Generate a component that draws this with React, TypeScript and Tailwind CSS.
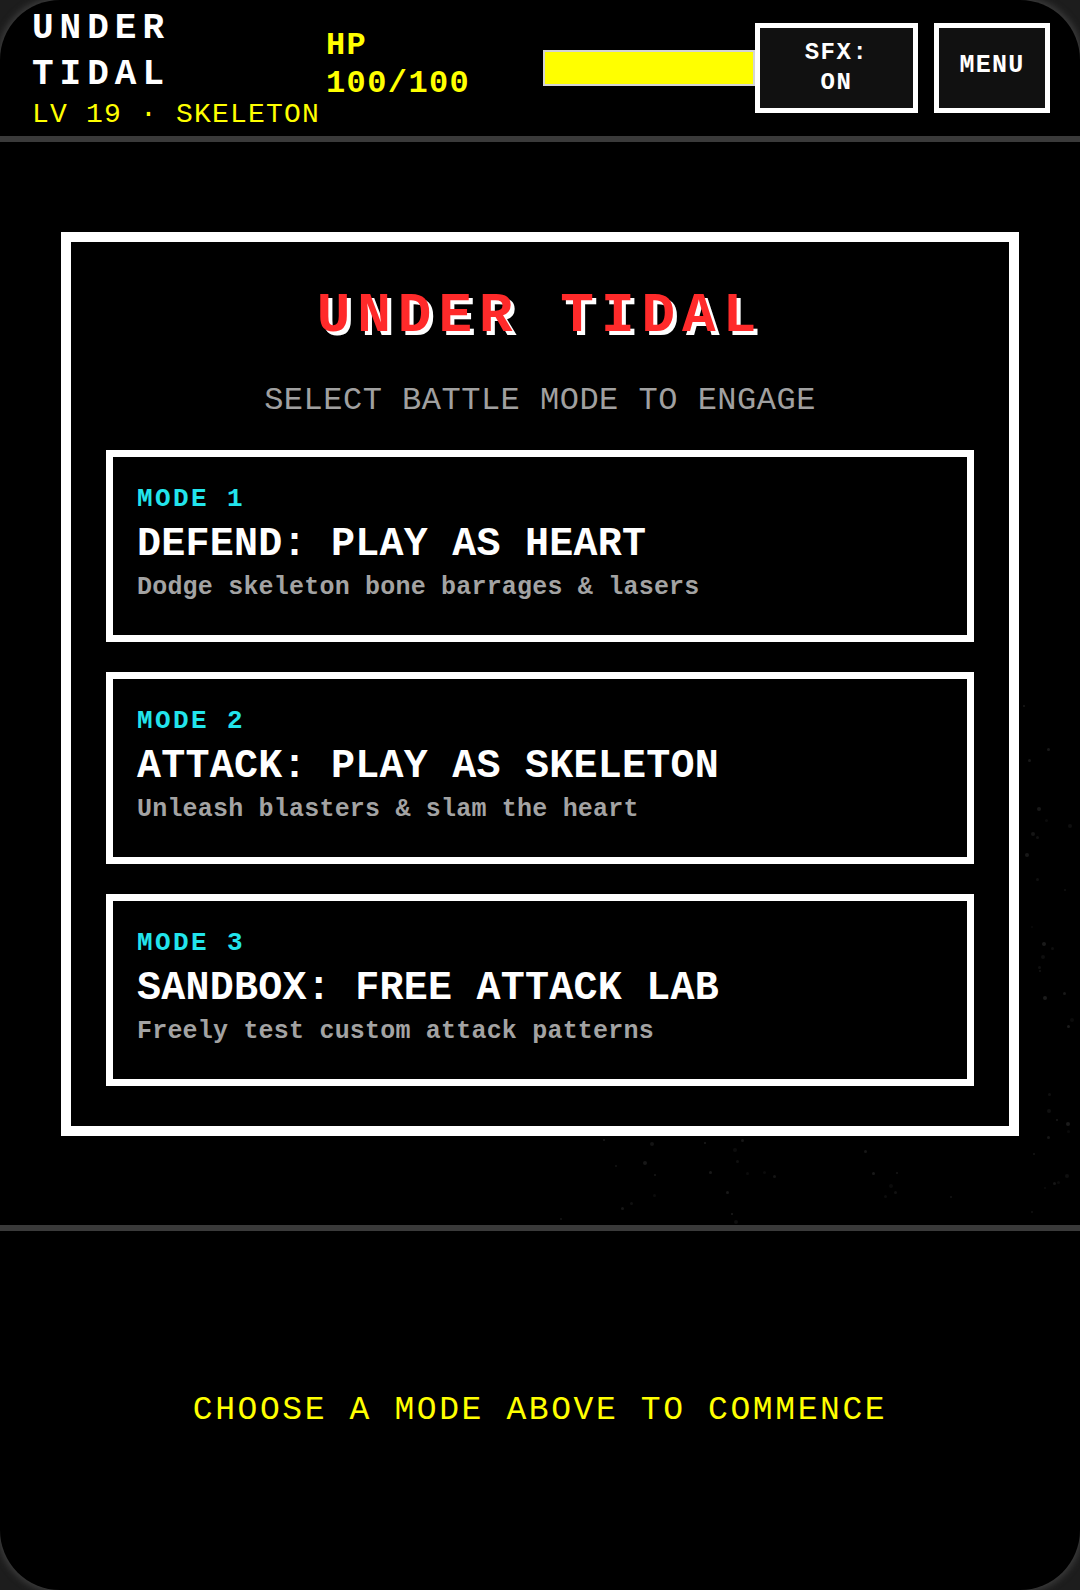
import React from "react";

type Mode = { tag: string; title: string; desc: string };

const MODES: Mode[] = [
  { tag: "MODE 1", title: "DEFEND: PLAY AS HEART", desc: "Dodge skeleton bone barrages & lasers" },
  { tag: "MODE 2", title: "ATTACK: PLAY AS SKELETON", desc: "Unleash blasters & slam the heart" },
  { tag: "MODE 3", title: "SANDBOX: FREE ATTACK LAB", desc: "Freely test custom attack patterns" },
];

type Mote = { x: number; y: number; s: number; o: number };

function makeDust(count: number, seed: number): Mote[] {
  let v = seed;
  const rnd = () => {
    v = (v * 1664525 + 1013904223) % 4294967296;
    return v / 4294967296;
  };
  const out: Mote[] = [];
  for (let i = 0; i < count; i++) {
    const band = rnd();
    let x: number;
    let y: number;
    if (band < 0.55) {
      x = 1022 + rnd() * 52;
      y = 700 + rnd() * 520;
    } else {
      x = 560 + rnd() * 400;
      y = 1138 + rnd() * 82;
    }
    out.push({ x, y, s: 2 + Math.round(rnd() * 2), o: 0.04 + rnd() * 0.07 });
  }
  return out;
}

const DUST = makeDust(60, 7);

function ModeCard({ mode }: { mode: Mode }) {
  return (
    <button className="flex h-[192px] w-full flex-col items-stretch justify-start border-[7px] border-white bg-black px-6 pt-[26px] text-left">
      <div className="text-[26px] font-bold leading-[32px] tracking-[2.4px] text-[#22e4ec]">{mode.tag}</div>
      <div className="mt-[6px] text-[40px] font-bold leading-[48px] tracking-[0.25px] text-white">{mode.title}</div>
      <div className="mt-[3px] text-[25px] font-bold leading-[32px] tracking-[0.2px] text-[#a3a3a3]">{mode.desc}</div>
    </button>
  );
}

export default function App() {
  return (
    <div className="h-[1590px] w-[1080px] bg-[#1d1d1d] font-['Liberation_Mono','Courier_New',monospace]">
      <div className="relative flex h-full flex-col overflow-hidden rounded-[60px] bg-black shadow-[0_0_6px_3px_#3a3a3a]">
        {/* dust layer */}
        <div className="pointer-events-none absolute inset-0">
          {DUST.map((d, i) => (
            <span
              key={i}
              className="absolute rounded-full bg-white"
              style={{ left: d.x, top: d.y, width: d.s, height: d.s, opacity: d.o }}
            />
          ))}
        </div>

        {/* top status bar */}
        <header className="relative flex h-[142px] shrink-0 items-center border-b-[6px] border-[#3a3a3a] pl-[32px] pr-[30px]">
          <div className="mt-[2px] w-[294px] shrink-0">
            <div className="w-[200px] text-[36px] font-bold leading-[46px] tracking-[6px] text-white">UNDER TIDAL</div>
            <div className="whitespace-nowrap text-[28px] leading-[34px] tracking-[1.2px] text-[#ffff00]">LV 19 · SKELETON</div>
          </div>
          <div className="w-[217px] shrink-0 pb-[6px] text-[32px] font-bold leading-[38px] tracking-[1.4px] text-[#ffff00]">
            <span className="block">HP</span>
            <span className="block">100/100</span>
          </div>
          <div className="h-[36px] w-[212px] shrink-0 border-2 border-[#d4d4d4] bg-[#ffff00]" />
          <button className="flex h-[90px] w-[163px] shrink-0 items-center justify-center border-[5px] border-white bg-[#111111] text-center text-[24px] font-bold leading-[30px] tracking-[1.5px] text-white">
            <span>
              SFX:
              <br />
              ON
            </span>
          </button>
          <button className="ml-[16px] flex h-[90px] w-[116px] shrink-0 items-center justify-center border-[5px] border-white bg-[#111111] pb-[4px] text-[25px] font-bold leading-[30px] tracking-[1.2px] text-white">
            MENU
          </button>
        </header>

        {/* mode select panel */}
        <main className="relative flex flex-1 items-center justify-center">
          <section className="w-[958px] border-[10px] border-white bg-black px-[35px] pb-[40px] pt-[46px]">
            <h1 className="text-center text-[56px] font-bold leading-[56px] tracking-[7px] text-[#ff2a2a] [text-shadow:4px_4px_0_#ffffff]">
              UNDER TIDAL
            </h1>
            <p className="mt-[37px] text-center text-[32px] leading-[40px] tracking-[0.5px] text-[#a0a0a0]">
              SELECT BATTLE MODE TO ENGAGE
            </p>
            <div className="mt-[29px] flex flex-col gap-[30px]">
              {MODES.map((m) => (
                <ModeCard key={m.tag} mode={m} />
              ))}
            </div>
          </section>
        </main>

        {/* footer prompt */}
        <footer className="relative flex h-[365px] shrink-0 items-center justify-center border-t-[6px] border-[#3a3a3a]">
          <p className="text-[33px] leading-[40px] tracking-[2.6px] text-[#ffff00]">CHOOSE A MODE ABOVE TO COMMENCE</p>
        </footer>
      </div>
    </div>
  );
}
